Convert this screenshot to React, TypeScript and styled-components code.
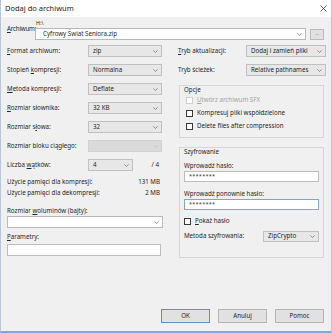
import React from 'react';
import styled, { createGlobalStyle } from 'styled-components';

const Global = createGlobalStyle`
  html, body { margin: 0; padding: 0; background: #f0f0f0; }
  body { font-family: "Noto Sans", "Open Sans", sans-serif; }
  * { box-sizing: border-box; }
`;

const Window = styled.div`
  width: 332px;
  height: 333px;
  background: #f0f0f0;
  border-left: 1px solid #b4c7dd;
  border-right: 1px solid #b4c7dd;
  border-bottom: 2px solid #87a7cf;
  display: flex;
  flex-direction: column;
  color: #262626;
  font-size: 6.2px;
  line-height: 1;
  white-space: nowrap;
`;

const TitleBar = styled.div`
  height: 17px;
  flex-shrink: 0;
  background: #fff;
  display: flex;
  align-items: center;
  justify-content: space-between;
  padding: 0 4px 0 4px;
`;

const Title = styled.span`
  font-size: 7.5px;
  color: #222;
`;

const Body = styled.div`
  flex: 1;
  display: flex;
  flex-direction: column;
  padding: 0 5px 0 6px;
`;

const U = styled.span`
  text-decoration: underline;
  text-decoration-thickness: 0.5px;
  text-underline-offset: 1px;
`;

const ArchiveRow = styled.div`
  display: flex;
  margin-top: 1px;
`;

const ArchiveLabel = styled.div`
  width: 28px;
  padding-top: 7px;
  line-height: 8px;
  letter-spacing: -0.2px;
`;

const ArchiveCol = styled.div`
  flex: 1;
  display: flex;
  flex-direction: column;
`;

const PathText = styled.div`
  height: 10px;
  line-height: 10px;
  font-size: 5.4px;
  padding-left: 1px;
`;

const InputRow = styled.div`
  display: flex;
  align-items: flex-end;
  gap: 4px;
  margin-right: 2px;
`;

const EditCombo = styled.div<{ $h?: number }>`
  flex: 1;
  height: ${p => p.$h ?? 12}px;
  background: #fff;
  border: 1px solid #b9b9b9;
  display: flex;
  align-items: center;
  justify-content: space-between;
  padding: 0 3px 0 7px;
`;

const BrowseButton = styled.div`
  width: 14px;
  height: 11px;
  background: #e1e1e1;
  border: 1px solid #bcbcbc;
  display: flex;
  align-items: center;
  justify-content: center;
  font-size: 5px;
  color: #777;
  padding-bottom: 2px;
`;

const Columns = styled.div`
  display: grid;
  grid-template-columns: 156px 1fr;
  column-gap: 15px;
  margin-top: 5px;
`;

const Column = styled.div`
  display: flex;
  flex-direction: column;
`;

const FieldRow = styled.div<{ $cols: string; $mb?: number }>`
  display: grid;
  grid-template-columns: ${p => p.$cols};
  align-items: center;
  height: 12px;
  margin-bottom: ${p => p.$mb ?? 7}px;
`;

const Combo = styled.div<{ $disabled?: boolean; $h?: number }>`
  height: ${p => p.$h ?? 12}px;
  background: ${p => (p.$disabled ? '#dadada' : '#e7e7e7')};
  border: 1px solid ${p => (p.$disabled ? '#d2d2d2' : '#c0c0c0')};
  display: flex;
  align-items: center;
  justify-content: space-between;
  padding: 0 3px 0 4px;
  color: ${p => (p.$disabled ? '#999' : '#262626')};
`;

const Slash = styled.div`
  text-align: right;
  padding-right: 4px;
`;

const MemRow = styled.div<{ $mt?: number }>`
  display: flex;
  justify-content: space-between;
  height: 10px;
  line-height: 10px;
  margin-top: ${p => p.$mt ?? 0}px;
  padding-right: 3px;
`;

const PlainLabel = styled.div<{ $mt?: number }>`
  height: 10px;
  line-height: 10px;
  margin-top: ${p => p.$mt ?? 0}px;
`;

const TextInput = styled.div<{ $focus?: boolean; $h?: number }>`
  height: ${p => p.$h ?? 12}px;
  background: #fff;
  border: 1px solid ${p => (p.$focus ? '#82a5d0' : '#bdbdbd')};
  display: flex;
  align-items: center;
  padding: 0 4px;
  font-size: 5.6px;
  letter-spacing: 0.2px;
  color: #333;
`;

const ParamInput = styled(TextInput)`
  margin-top: 2px;
  margin-right: 2px;
`;

const Group = styled.div<{ $mt: number; $pb: number }>`
  margin: ${p => p.$mt}px 2px 0 1px;
  border: 1px solid #d6d6d6;
  padding: 0 4px ${p => p.$pb}px 4px;
  display: flex;
  flex-direction: column;
`;

const GroupTitle = styled.div`
  height: 8px;
  line-height: 8px;
`;

const CheckRow = styled.label<{ $disabled?: boolean; $mt?: number }>`
  display: flex;
  align-items: center;
  gap: 4px;
  height: 13px;
  margin-left: 2px;
  margin-top: ${p => p.$mt ?? 0}px;
  color: ${p => (p.$disabled ? '#a3a3a3' : '#262626')};
`;

const Box = styled.span<{ $disabled?: boolean }>`
  width: 7px;
  height: 7px;
  background: #fff;
  border: 1px solid ${p => (p.$disabled ? '#cfcfcf' : '#3a3a3a')};
  flex-shrink: 0;
`;

const ButtonRow = styled.div`
  margin-top: auto;
  margin-bottom: 8px;
  margin-right: 2px;
  display: flex;
  justify-content: flex-end;
  gap: 8px;
`;

const Button = styled.div<{ $default?: boolean }>`
  width: 49px;
  height: 14px;
  background: #e1e1e1;
  border: 1px solid ${p => (p.$default ? '#5f8fcb' : '#b4b4b4')};
  display: flex;
  align-items: center;
  justify-content: center;
  color: #262626;
`;

const Chevron = ({ color = '#6a6a6a' }: { color?: string }) => (
  <svg width="5" height="3" viewBox="0 0 5 3">
    <polyline points="0.4,0.4 2.5,2.5 4.6,0.4" fill="none" stroke={color} strokeWidth="0.7" />
  </svg>
);

const CloseIcon = () => (
  <svg width="7" height="7" viewBox="0 0 7 7">
    <line x1="0.5" y1="0.5" x2="6.5" y2="6.5" stroke="#333" strokeWidth="0.8" />
    <line x1="6.5" y1="0.5" x2="0.5" y2="6.5" stroke="#333" strokeWidth="0.8" />
  </svg>
);

const SelectBox = ({ value, disabled, h }: { value?: string; disabled?: boolean; h?: number }) => (
  <Combo $disabled={disabled} $h={h}>
    <span>{value}</span>
    <Chevron color={disabled ? '#bdbdbd' : '#6a6a6a'} />
  </Combo>
);

const LEFT = '81px 74px';
const RIGHT = '68px 1fr';

export default function App() {
  return (
    <>
      <Global />
      <Window>
        <TitleBar>
          <Title>Dodaj do archiwum</Title>
          <CloseIcon />
        </TitleBar>
        <Body>
          <ArchiveRow>
            <ArchiveLabel>
              <U>A</U>rchiwum:
            </ArchiveLabel>
            <ArchiveCol>
              <PathText>H:\</PathText>
              <InputRow>
                <EditCombo>
                  <span>Cyfrowy Świat Seniora.zip</span>
                  <Chevron />
                </EditCombo>
                <BrowseButton>...</BrowseButton>
              </InputRow>
            </ArchiveCol>
          </ArchiveRow>

          <Columns>
            <Column>
              <FieldRow $cols={LEFT}>
                <span><U>F</U>ormat archiwum:</span>
                <SelectBox value="zip" />
              </FieldRow>
              <FieldRow $cols={LEFT}>
                <span>Stopień <U>k</U>ompresji:</span>
                <SelectBox value="Normalna" />
              </FieldRow>
              <FieldRow $cols={LEFT}>
                <span><U>M</U>etoda kompresji:</span>
                <SelectBox value="Deflate" />
              </FieldRow>
              <FieldRow $cols={LEFT}>
                <span><U>R</U>ozmiar słownika:</span>
                <SelectBox value="32 KB" />
              </FieldRow>
              <FieldRow $cols={LEFT}>
                <span>Rozmiar s<U>ł</U>owa:</span>
                <SelectBox value="32" />
              </FieldRow>
              <FieldRow $cols={LEFT}>
                <span>Rozmiar bloku ciągłego:</span>
                <SelectBox disabled />
              </FieldRow>
              <FieldRow $cols="81px 45px 1fr" $mb={6}>
                <span>Liczba <U>w</U>ątków:</span>
                <SelectBox value="4" />
                <Slash>/ 4</Slash>
              </FieldRow>
              <MemRow>
                <span>Użycie pamięci dla kompresji:</span>
                <span>131 MB</span>
              </MemRow>
              <MemRow $mt={1}>
                <span>Użycie pamięci dla dekompresji:</span>
                <span>2 MB</span>
              </MemRow>
              <PlainLabel $mt={8}>
                Rozmiar <U>w</U>oluminów (bajty):
              </PlainLabel>
              <EditCombo style={{ flex: 'none' }} $h={12}>
                <span />
                <Chevron />
              </EditCombo>
              <PlainLabel $mt={4}>
                <U>P</U>arametry:
              </PlainLabel>
              <ParamInput $h={12} />
            </Column>

            <Column>
              <FieldRow $cols={RIGHT}>
                <span><U>T</U>ryb aktualizacji:</span>
                <SelectBox value="Dodaj i zamień pliki" />
              </FieldRow>
              <FieldRow $cols={RIGHT}>
                <span>Tryb ścieżek:</span>
                <SelectBox value="Relative pathnames" />
              </FieldRow>
              <Group $mt={2} $pb={4}>
                <GroupTitle>Opcje</GroupTitle>
                <CheckRow $disabled>
                  <Box $disabled />
                  <span><U>U</U>twórz archiwum SFX</span>
                </CheckRow>
                <CheckRow>
                  <Box />
                  <span>Kompresuj pliki współdzielone</span>
                </CheckRow>
                <CheckRow>
                  <Box />
                  <span>Delete files after compression</span>
                </CheckRow>
              </Group>
              <Group $mt={9} $pb={15}>
                <GroupTitle>Szyfrowanie</GroupTitle>
                <PlainLabel $mt={5}>Wprowadź hasło:</PlainLabel>
                <TextInput $h={11}>********</TextInput>
                <PlainLabel $mt={7}>Wprowadź ponownie hasło:</PlainLabel>
                <TextInput $h={11} $focus>********</TextInput>
                <CheckRow $mt={5} style={{ marginLeft: 0 }}>
                  <Box />
                  <span><U>P</U>okaż hasło</span>
                </CheckRow>
                <FieldRow $cols="79px 1fr" $mb={0} style={{ marginTop: 2 }}>
                  <span>Metoda szyfrowania:</span>
                  <SelectBox value="ZipCrypto" h={11} />
                </FieldRow>
              </Group>
            </Column>
          </Columns>

          <ButtonRow>
            <Button $default>OK</Button>
            <Button>Anuluj</Button>
            <Button>Pomoc</Button>
          </ButtonRow>
        </Body>
      </Window>
    </>
  );
}
